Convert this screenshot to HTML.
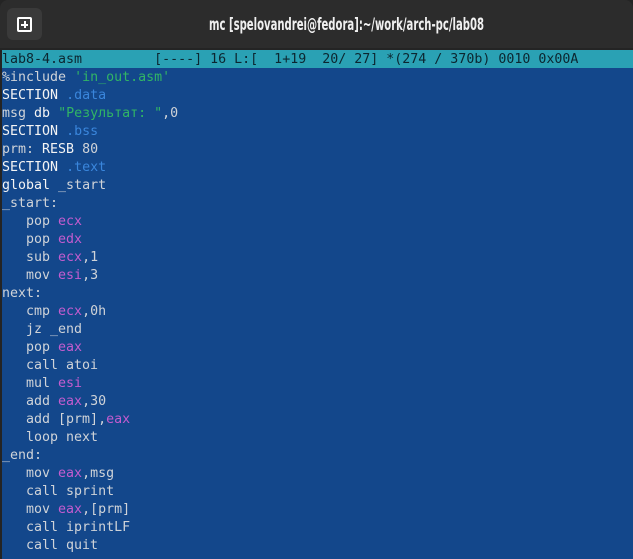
<!DOCTYPE html>
<html><head><meta charset="utf-8"><style>
html,body{margin:0;padding:0;width:633px;height:559px;overflow:hidden;background:#242424;}
.title{position:absolute;left:0;top:0;width:633px;height:48px;background:#2c2c2c;border-radius:8px 8px 0 0;}
.btn{position:absolute;left:7px;top:8px;width:35px;height:32px;background:#3a3a3a;border-radius:6px;}
.btn .ic{position:absolute;left:10px;top:9px;width:11px;height:11px;border:2px solid #fff;border-radius:2px;}
.btn .ic:before{content:"";position:absolute;left:4.5px;top:2px;width:2px;height:7px;background:#fff;}
.btn .ic:after{content:"";position:absolute;left:2px;top:4.5px;width:7px;height:2px;background:#fff;}
.tt{position:absolute;left:0;top:0;}
.term{position:absolute;left:2px;top:50px;width:631px;height:509px;background:#13478b;font:13.3px "DejaVu Sans Mono","Liberation Mono",monospace;color:#cfd3d8;}
.l{height:18px;line-height:20px;white-space:pre;}
.st{background:#2aa1b4;color:#0c2630;}
.w{color:#f4f4f4}.g{color:#31b565}.b{color:#3a86dc}.p{color:#c35ccf}
</style></head><body>
<div class="title"><div class="btn"><div class="ic"></div></div>
<svg class="tt" width="633" height="48"><text x="209" y="30" font-family="DejaVu Sans, Liberation Sans, sans-serif" font-weight="bold" font-size="17" fill="#f0f0f0" textLength="275" lengthAdjust="spacingAndGlyphs">mc [spelovandrei@fedora]:~/work/arch-pc/lab08</text></svg></div>
<div class="term">
<div class="l st">lab8-4.asm         [----] 16 L:[  1+19  20/ 27] *(274 / 370b) 0010 0x00A</div>
<div class="l">%include <span class="g">'in_out.asm'</span></div>
<div class="l"><span class="w">SECTION</span> <span class="b">.data</span></div>
<div class="l">msg <span class="w">db</span> <span class="g">"Результат: "</span>,0</div>
<div class="l"><span class="w">SECTION</span> <span class="b">.bss</span></div>
<div class="l">prm: <span class="w">RESB</span> 80</div>
<div class="l"><span class="w">SECTION</span> <span class="b">.text</span></div>
<div class="l"><span class="w">global</span> _start</div>
<div class="l">_start:</div>
<div class="l">   pop <span class="p">ecx</span></div>
<div class="l">   pop <span class="p">edx</span></div>
<div class="l">   sub <span class="p">ecx</span>,1</div>
<div class="l">   mov <span class="p">esi</span>,3</div>
<div class="l">next:</div>
<div class="l">   cmp <span class="p">ecx</span>,0h</div>
<div class="l">   jz _end</div>
<div class="l">   pop <span class="p">eax</span></div>
<div class="l">   call atoi</div>
<div class="l">   mul <span class="p">esi</span></div>
<div class="l">   add <span class="p">eax</span>,30</div>
<div class="l">   add [prm],<span class="p">eax</span></div>
<div class="l">   loop next</div>
<div class="l">_end:</div>
<div class="l">   mov <span class="p">eax</span>,msg</div>
<div class="l">   call sprint</div>
<div class="l">   mov <span class="p">eax</span>,[prm]</div>
<div class="l">   call iprintLF</div>
<div class="l">   call quit</div>
</div>
</body></html>
